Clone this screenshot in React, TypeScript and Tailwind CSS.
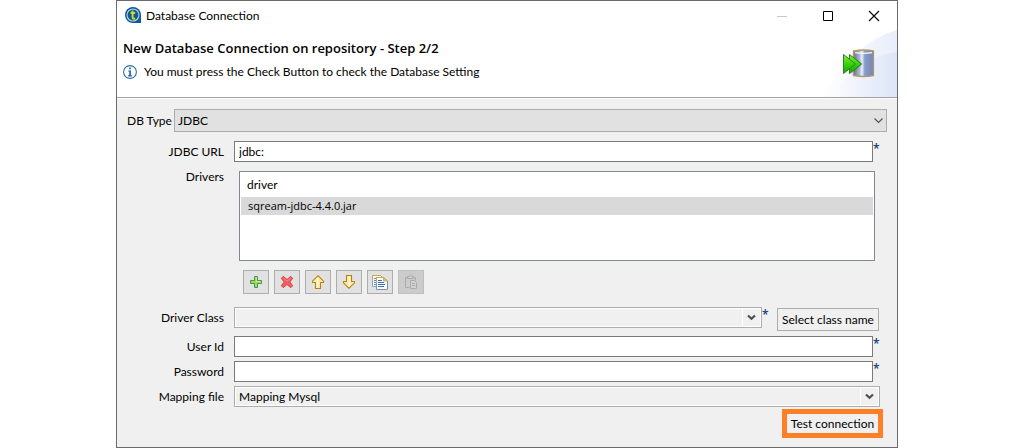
import type { ReactNode } from "react";

function Logo() {
  return (
    <svg width="17" height="17" viewBox="0 0 17 17" aria-hidden="true">
      <path d="M8 0a8 8 0 0 1 8 8v8H8A8 8 0 0 1 8 0Z" fill="#0d5a94" />
      <circle cx="8" cy="8" r="6" fill="none" stroke="#b9d3e4" strokeWidth="1.1" />
      <path d="M7.6 3.6v6.6q0 1.5 1.4 1.5h1.2M5.6 6.1h4.6" fill="none" stroke="#d2d52c" strokeWidth="2" />
    </svg>
  );
}

function InfoIcon() {
  return (
    <svg width="14" height="14" viewBox="0 0 14 14" aria-hidden="true">
      <circle cx="7" cy="7" r="6.4" fill="#fff" stroke="#2b6fae" strokeWidth="1.1" />
      <path d="M6.2 2.6h1.7v1.7H6.2zM5.2 5.4h2.7v4.9h1.1v1.1H5.1v-1.1h1.1V6.5h-1z" fill="#2163a3" />
    </svg>
  );
}

function DatabaseIcon() {
  return (
    <svg width="34" height="32" viewBox="0 0 34 32" aria-hidden="true">
      <defs>
        <linearGradient id="steel">
          <stop offset="0" stopColor="#66748f" />
          <stop offset=".3" stopColor="#a9b6d2" />
          <stop offset=".42" stopColor="#eef3fd" />
          <stop offset=".56" stopColor="#8b9cc7" />
          <stop offset="1" stopColor="#7186b7" />
        </linearGradient>
        <linearGradient id="leaf" x2="0" y2="1">
          <stop offset="0" stopColor="#8af03c" />
          <stop offset=".5" stopColor="#35d40b" />
          <stop offset="1" stopColor="#1f9d08" />
        </linearGradient>
        <filter id="soft" x="-50%" y="-50%" width="200%" height="200%">
          <feGaussianBlur stdDeviation="1.2" />
        </filter>
      </defs>
      <path d="M12.5 3Q22.5 1 32.5 3v24.5Q22.5 29.5 12.5 27.5Z" fill="url(#steel)" stroke="#b39a68" strokeWidth="1.3" />
      <path d="M14 4.6Q22.5 6 31 4.6" fill="none" stroke="#f5f8ff" strokeWidth="1.2" />
      <path d="M9 8l12 8-12 10Z" fill="#303030" opacity=".4" filter="url(#soft)" />
      <path d="M8.5 6.5L20.5 16 8.5 25.5Z" fill="url(#leaf)" stroke="#2a8515" />
      <path d="M2.5 6.5L14.5 16 2.5 25.5Z" fill="url(#leaf)" stroke="#2a8515" />
    </svg>
  );
}

function Swoosh() {
  return (
    <svg width="76" height="67" viewBox="0 0 76 67" aria-hidden="true">
      <defs>
        <linearGradient id="sky">
          <stop offset="0" stopColor="#fff" />
          <stop offset="1" stopColor="#e8eefa" />
        </linearGradient>
        <linearGradient id="sky2">
          <stop offset="0" stopColor="#eef2fc" stopOpacity="0" />
          <stop offset="1" stopColor="#dde5f7" />
        </linearGradient>
      </defs>
      <path d="M0 67Q36 10 76 0V67Z" fill="url(#sky)" />
      <path d="M10 67Q38 26 76 22V67Z" fill="url(#sky2)" />
    </svg>
  );
}

function PlusIcon() {
  return (
    <svg width="16" height="16" viewBox="0 0 16 16" aria-hidden="true">
      <path d="M6.5 2.5h3v4h4v3h-4v4h-3v-4h-4v-3h4Z" fill="#a7d65b" stroke="#41965a" />
      <path d="M7.5 3.5h1v4h4v1" fill="none" stroke="#d5ec8d" strokeWidth=".8" />
    </svg>
  );
}

function CrossIcon() {
  return (
    <svg width="16" height="16" viewBox="0 0 16 16" aria-hidden="true">
      <path d="M4.3 2.3L8 5.5l3.7-3.2 2 2L10.8 8l2.9 3.7-2 2L8 10.500l-3.700 3.200-2-2L5.200 8 2.300 4.300Z" fill="#ec5c60" stroke="#d9454c" strokeLinejoin="round" />
      <path d="M4.3 4L8 7.2 11.7 4" fill="none" stroke="#f28b88" />
    </svg>
  );
}

function ArrowIcon({ down = false }: { down?: boolean }) {
  return (
    <svg width="16" height="16" viewBox="0 0 16 16" aria-hidden="true" className={down ? "rotate-180" : ""}>
      <path d="M8 1.7L13.5 7.2v1.3h-3v6h-5v-6h-3V7.2Z" fill="#fdeaa0" stroke="#b9801c" strokeWidth="1.1" />
      <path d="M7.5 4v9.5" stroke="#fffbe4" strokeWidth="1.5" />
    </svg>
  );
}

function CopyIcon() {
  return (
    <svg width="16" height="16" viewBox="0 0 16 16" aria-hidden="true">
      <path d="M.5 1.5h8l2 2v9H.5Z" fill="#f4f8ff" stroke="#8d9dba" />
      <path d="M.5 7v-5.500h8l1 1" fill="none" stroke="#c9a94f" />
      <path d="M2 4.5h3M2 6.5h3M2 8.5h3M2 10.5h3" stroke="#6288c0" />
      <path d="M4.5 3.5h7l4 3.5v8.5h-11Z" fill="#f7faff" stroke="#7f92b5" />
      <path d="M4.5 9v-5.500h7" fill="none" stroke="#c9a94f" />
      <path d="M11.5 3.5v3.5h4Z" fill="#e6c873" stroke="#bd9e50" strokeWidth=".7" />
      <path d="M6 6.5h4M6 8.5h6M6 10.5h7M6 12.5h6" stroke="#456fae" />
    </svg>
  );
}

function PasteIcon() {
  return (
    <svg width="16" height="16" viewBox="0 0 16 16" aria-hidden="true" fill="none" stroke="#acacac">
      <path d="M6.5 13.5h-4v-10h2m6 0h2v3M4.5 4.5v-2h1.5q0-1.5 1.5-1.5t1.5 1.5h1.5v2Z" />
      <path d="M7.5 6.5h4l2 2v6h-6Z" fill="#d2d2d2" />
      <path d="M9 9.5h3M9 11.5h3" />
    </svg>
  );
}

function Chevron({ bold = false }: { bold?: boolean }) {
  return (
    <svg width="9" height="7" viewBox="0 0 9 7" aria-hidden="true">
      <path
        d={bold ? "M1 1.5l3.5 3.3L8 1.5" : "M.5 1.5l4 4 4-4"}
        fill="none"
        stroke={bold ? "#505050" : "#555"}
        strokeWidth={bold ? 2.2 : 1.2}
      />
    </svg>
  );
}

function Row({ id, label, children }: { id: string; label: string; children: ReactNode }) {
  return (
    <div className="flex gap-2.5 pr-[17px]">
      <label htmlFor={id} className="h-[21px] w-[107px] shrink-0 text-right leading-[21px]">
        {label}
      </label>
      {children}
    </div>
  );
}

function Star() {
  return <span className="w-[7px] shrink-0 font-['Noto_Sans',sans-serif] text-[12px] leading-4 font-semibold text-[#204a7c]">*</span>;
}

function TextField({ id, value, type = "text" }: { id: string; value?: string; type?: string }) {
  return (
    <div className="flex flex-1">
      <input
        id={id}
        type={type}
        defaultValue={value}
        className="h-[21px] min-w-0 flex-1 border border-[#7a7a7a] bg-white px-1 outline-none"
      />
      <Star />
    </div>
  );
}

function Combo({ id, options }: { id: string; options: string[] }) {
  return (
    <div className="relative flex-1">
      <select
        id={id}
        className="block h-[21px] w-full appearance-none border border-[#adadad] bg-[#f0f0f0] px-1 leading-4 shadow-[inset_0_0_0_1px_#fff] outline-none"
      >
        {options.map((o) => (
          <option key={o}>{o}</option>
        ))}
      </select>
      <span className="pointer-events-none absolute inset-y-0.5 right-0.5 flex w-[18px] items-center justify-center border-l border-white">
        <Chevron bold />
      </span>
    </div>
  );
}

const tools = [
  { name: "Add", icon: <PlusIcon /> },
  { name: "Remove", icon: <CrossIcon /> },
  { name: "Move up", icon: <ArrowIcon /> },
  { name: "Move down", icon: <ArrowIcon down /> },
  { name: "Copy", icon: <CopyIcon /> },
  { name: "Paste", icon: <PasteIcon />, disabled: true },
];

export default function App() {
  return (
    <div className="min-h-screen bg-white pr-[122px] pl-[116px] font-['Lato','Noto_Sans',sans-serif] text-[12px] leading-4 text-black">
      <main className="border border-[#6b6b6e] bg-[#f0f0f0]">
        <header className="relative border-b border-[#a0a0a0] bg-white">
          <div className="absolute right-0 bottom-0">
            <Swoosh />
          </div>
          <div className="flex h-[29px] items-center pl-2">
            <Logo />
            <span className="ml-1 flex-1">Database Connection</span>
            <div className="flex">
              <button aria-label="Minimize" className="flex w-[46px] justify-center">
                <svg width="12" height="12" viewBox="0 0 12 12"><path d="M1 6.5h10" stroke="#c9c9c9" /></svg>
              </button>
              <button aria-label="Maximize" className="flex w-[46px] justify-center">
                <svg width="12" height="12" viewBox="0 0 12 12"><path d="M1.5 1.5h9v9h-9Z" fill="none" stroke="#000" /></svg>
              </button>
              <button aria-label="Close" className="flex w-[46px] justify-center">
                <svg width="12" height="12" viewBox="0 0 12 12"><path d="M1 1l10 10M11 1L1 11" stroke="#000" strokeWidth="1.1" /></svg>
              </button>
            </div>
          </div>
          <div className="relative flex h-[67px] justify-between pt-2.5 pr-[22px] pl-1.5">
            <div>
              <h1 className="font-['Open_Sans','Noto_Sans',sans-serif] text-[13px] leading-4 font-semibold">
                New Database Connection on repository - Step 2/2
              </h1>
              <p className="mt-2 flex items-center gap-[7px]">
                <InfoIcon />
                You must press the Check Button to check the Database Setting
              </p>
            </div>
            <div className="mt-2">
              <DatabaseIcon />
            </div>
          </div>
        </header>

        <form className="border-t border-white pt-2.5 pb-[9px]" onSubmit={(e) => e.preventDefault()}>
          <div className="flex items-center gap-1 pr-2.5 pl-2.5">
            <label htmlFor="dbtype" className="w-[43px] whitespace-nowrap">DB Type</label>
            <div className="relative flex-1">
              <select
                id="dbtype"
                className="block h-[23px] w-full appearance-none border border-[#adadad] bg-[#e1e1e1] px-[3px] outline-none"
              >
                <option>JDBC</option>
              </select>
              <span className="pointer-events-none absolute inset-y-0 right-1 flex items-center">
                <Chevron />
              </span>
            </div>
          </div>

          <div className="mt-[9px]">
            <Row id="url" label="JDBC URL">
              <TextField id="url" value="jdbc:" />
            </Row>
          </div>

          <div className="mt-1 flex gap-[15px] pr-[22px]">
            <span id="drivers" className="h-[21px] w-[107px] shrink-0 text-right leading-[21px]">Drivers</span>
            <div className="mt-[5px] min-w-0 flex-1">
              <div className="h-[90px] border border-[#828790] bg-white p-px">
                <table aria-labelledby="drivers" className="w-full border-collapse">
                  <thead>
                    <tr className="h-6">
                      <th className="px-1.5 py-0 text-left font-normal">driver</th>
                    </tr>
                  </thead>
                  <tbody>
                    <tr className="h-[18px] bg-[#d9d9d9] font-['Open_Sans',sans-serif] text-[11px]">
                      <td className="px-[7px] py-0">sqream-jdbc-4.4.0.jar</td>
                    </tr>
                  </tbody>
                </table>
              </div>
              <div className="mt-[9px] flex gap-[5px] pl-1">
                {tools.map((t) => (
                  <button
                    key={t.name}
                    type="button"
                    aria-label={t.name}
                    disabled={t.disabled}
                    className="flex h-6 w-[26px] items-center justify-center border border-[#adadad] bg-[#e1e1e1] disabled:border-[#bfbfbf] disabled:bg-[#cccccc]"
                  >
                    {t.icon}
                  </button>
                ))}
              </div>
            </div>
          </div>

          <div className="mt-[13px] flex items-start">
            <div className="flex flex-1 gap-2.5">
              <label htmlFor="driverclass" className="w-[107px] shrink-0 text-right leading-[21px]">Driver Class</label>
              <div className="flex flex-1">
                <Combo id="driverclass" options={[""]} />
                <Star />
              </div>
            </div>
            <button
              type="button"
              className="mt-px mr-[18px] ml-2 h-[23px] w-[102px] border border-[#adadad] whitespace-nowrap"
            >
              Select class name
            </button>
          </div>

          <div className="mt-[5px] flex flex-col gap-1">
            <Row id="user" label="User Id">
              <TextField id="user" />
            </Row>
            <Row id="password" label="Password">
              <TextField id="password" type="password" />
            </Row>
            <Row id="mapping" label="Mapping file">
              <Combo id="mapping" options={["Mapping Mysql"]} />
            </Row>
          </div>

          <div className="mt-0.5 flex justify-end pr-3.5">
            <button type="button" className="h-[29px] w-[101px] border-5 border-[#ff7f27] whitespace-nowrap">
              Test connection
            </button>
          </div>
        </form>
      </main>
    </div>
  );
}
